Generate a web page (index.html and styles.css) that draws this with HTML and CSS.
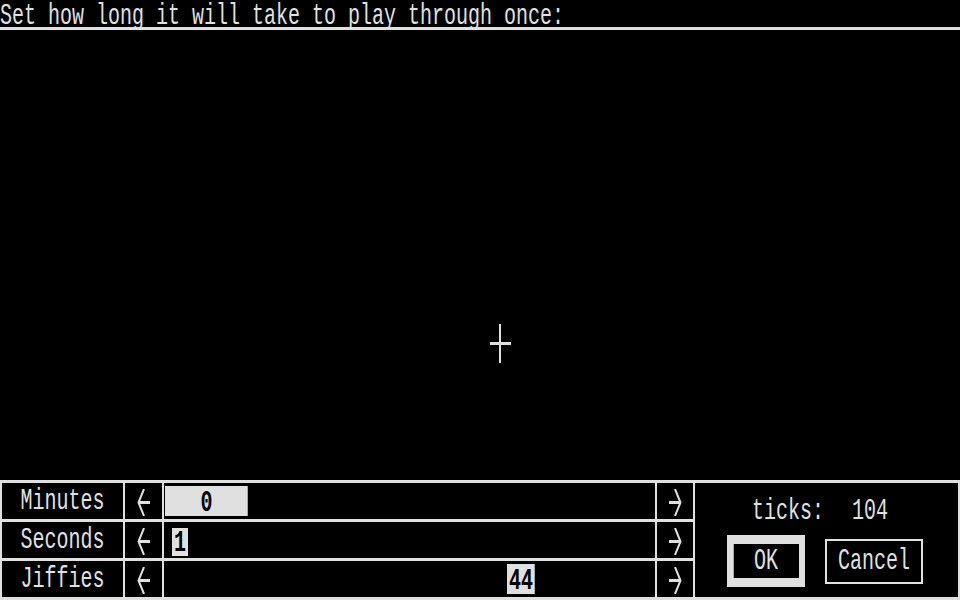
FILE: index.html
```html
<!DOCTYPE html>
<html lang="en">
<head>
    <meta charset="UTF-8">
    <title>Loop Length</title>
    <link rel="stylesheet" href="styles.css">
</head>
<body>
    <div class="title"><span class="txt">Set how long it will take to play through once:</span></div>

    <div class="canvas">
        <!-- mouse pointer -->
        <svg class="pointer" width="21" height="39" viewBox="0 0 21 39">
            <rect x="9" y="0" width="2" height="39" fill="#e0e0e0"/>
            <rect x="0" y="18" width="21" height="3" fill="#e0e0e0"/>
        </svg>
    </div>

    <div class="panel">
        <div class="cell"><span class="txt">Minutes</span></div>
        <div class="cell"><svg class="arrow" width="13" height="27" viewBox="0 0 13 27"><path d="M7 0 L1.5 13.5 L7 27" fill="none" stroke="#e0e0e0" stroke-width="2"/><path d="M1 13.5 H13" stroke="#e0e0e0" stroke-width="3"/></svg></div>
        <div class="cell track"><div class="thumb" style="margin-left: 1px; width: 83px;"><span class="txt">0</span></div></div>
        <div class="cell"><svg class="arrow" width="13" height="27" viewBox="0 0 13 27"><path d="M6 0 L11.5 13.5 L6 27" fill="none" stroke="#e0e0e0" stroke-width="2"/><path d="M0 13.5 H12" stroke="#e0e0e0" stroke-width="3"/></svg></div>

        <div class="cell side">
            <div class="ticks"><span class="txt">ticks:</span><span class="txt">104</span></div>
            <div class="buttons">
                <div class="btn default"><span class="txt">OK</span></div>
                <div class="btn"><span class="txt">Cancel</span></div>
            </div>
        </div>

        <div class="cell"><span class="txt">Seconds</span></div>
        <div class="cell"><svg class="arrow" width="13" height="27" viewBox="0 0 13 27"><path d="M7 0 L1.5 13.5 L7 27" fill="none" stroke="#e0e0e0" stroke-width="2"/><path d="M1 13.5 H13" stroke="#e0e0e0" stroke-width="3"/></svg></div>
        <div class="cell track"><div class="thumb edit" style="margin-left: 8px; width: 16px;"><span class="txt">1</span></div></div>
        <div class="cell"><svg class="arrow" width="13" height="27" viewBox="0 0 13 27"><path d="M6 0 L11.5 13.5 L6 27" fill="none" stroke="#e0e0e0" stroke-width="2"/><path d="M0 13.5 H12" stroke="#e0e0e0" stroke-width="3"/></svg></div>

        <div class="cell"><span class="txt">Jiffies</span></div>
        <div class="cell"><svg class="arrow" width="13" height="27" viewBox="0 0 13 27"><path d="M7 0 L1.5 13.5 L7 27" fill="none" stroke="#e0e0e0" stroke-width="2"/><path d="M1 13.5 H13" stroke="#e0e0e0" stroke-width="3"/></svg></div>
        <div class="cell track"><div class="thumb" style="margin-left: 343px; width: 28px;"><span class="txt">44</span></div></div>
        <div class="cell"><svg class="arrow" width="13" height="27" viewBox="0 0 13 27"><path d="M6 0 L11.5 13.5 L6 27" fill="none" stroke="#e0e0e0" stroke-width="2"/><path d="M0 13.5 H12" stroke="#e0e0e0" stroke-width="3"/></svg></div>
    </div>
</body>
</html>
```

FILE: styles.css
```css
body {
    margin: 0;
    width: 960px;
    height: 600px;
    background: #000;
    color: #e0e0e0;
    font-family: "Liberation Mono", "DejaVu Sans Mono", monospace;
    font-size: 20px;
    overflow: hidden;
}

/* system font is tall and narrow: 12px cells stretched vertically */
.txt {
    display: inline-block;
    line-height: 24px;
    height: 24px;
    white-space: pre;
    transform: scaleY(1.5);
    transform-origin: center center;
}

.title {
    height: 23px;
    padding-top: 4px;
    line-height: 16px;
    border-bottom: 3px solid #e0e0e0;
}
.title .txt {
    line-height: 16px;
    height: 16px;
    vertical-align: top;
    transform-origin: top left;
}

.canvas {
    position: relative;
    height: 450px;
}
.pointer {
    position: absolute;
    left: 490px;
    top: 294px;
}

.panel {
    display: grid;
    grid-template-columns: 121px 37px 491px 36px 263px;
    grid-template-rows: repeat(3, 36px);
    gap: 3px 2px;
    padding: 3px 2px;
    background: #e0e0e0;
}
.cell {
    background: #000;
    display: flex;
    align-items: center;
    justify-content: center;
}
.arrow {
    display: block;
    margin-top: 3px;
}

.track {
    justify-content: flex-start;
    align-items: flex-start;
}
.thumb {
    box-sizing: border-box;
    height: 30px;
    margin-top: 3px;
    padding-top: 5px;
    background: #e0e0e0;
    color: #000;
    font-weight: bold;
    display: flex;
    justify-content: center;
    align-items: flex-start;
    box-shadow: inset -1px 0 0 #a8a8a8;
}
.thumb.edit {
    height: 28px;
    margin-top: 6px;
    padding-top: 3px;
    box-shadow: none;
}

.side {
    grid-column: 5;
    grid-row: 1 / 4;
    flex-direction: column;
    align-items: flex-start;
    justify-content: flex-start;
}
.ticks {
    display: flex;
    gap: 28px;
    padding: 16px 0 0 57px;
}
.buttons {
    display: flex;
    align-items: center;
    gap: 20px;
    padding-left: 32px;
    margin-top: 12px;
}
.btn {
    box-sizing: border-box;
    width: 98px;
    height: 45px;
    border: 2px solid #e0e0e0;
    display: flex;
    align-items: center;
    justify-content: center;
}
.btn.default {
    width: 78px;
    height: 52px;
    border-width: 9px 6px;
    box-shadow: inset 1px 0 0 #a8a8a8;
}
```
